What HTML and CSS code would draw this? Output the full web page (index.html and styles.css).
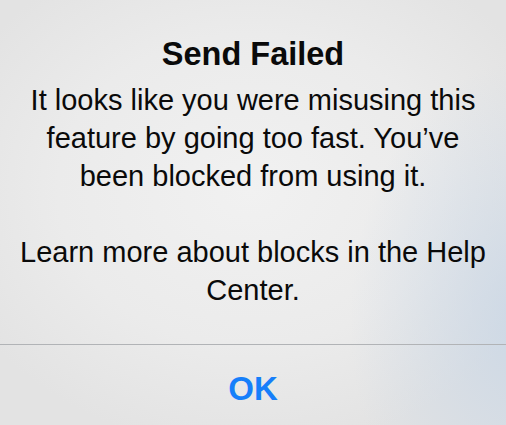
FILE: index.html
```html
<!DOCTYPE html>
<html>
<head>
<meta charset="utf-8">
<link rel="stylesheet" href="styles.css">
</head>
<body>
<div class="alert">
  <div class="content">
    <h1 class="title">Send Failed</h1>
    <p class="message">It looks like you were misusing this<br>feature by going too fast. You’ve<br>been blocked from using it.</p>
    <p class="message">Learn more about blocks in the Help<br>Center.</p>
  </div>
  <div class="actions">
    <button class="ok">OK</button>
  </div>
</div>
</body>
</html>
```
FILE: styles.css
```css
html, body {
  margin: 0;
  padding: 0;
  width: 506px;
  height: 425px;
  overflow: hidden;
}
body {
  font-family: "Liberation Sans", Arial, sans-serif;
  color: #0a0a0a;
  background:
    radial-gradient(ellipse 180px 260px at 530px 320px, rgba(200, 214, 230, 0.85), rgba(200, 214, 230, 0) 100%),
    radial-gradient(ellipse 320px 260px at 250px 190px, #f1f1f1 0%, #ebebeb 60%, #e3e3e3 100%);
}
.alert {
  display: flex;
  flex-direction: column;
  height: 425px;
}
.content {
  padding-top: 34px;
  border-bottom: 1px solid #b1b3b6;
  padding-bottom: 35px;
  text-align: center;
}
.title {
  margin: 0 0 7px;
  font-size: 32.5px;
  line-height: 40px;
  font-weight: bold;
}
.message {
  margin: 0;
  font-size: 29px;
  line-height: 38px;
}
.message + .message {
  margin-top: 38px;
}
.actions {
  flex: 1;
  display: flex;
  justify-content: center;
}
.ok {
  background: none;
  border: 0;
  padding: 8px 0 0;
  font-family: "Liberation Sans", Arial, sans-serif;
  font-size: 33px;
  font-weight: bold;
  line-height: 72px;
  color: #167ffa;
  height: 80px;
}
```
